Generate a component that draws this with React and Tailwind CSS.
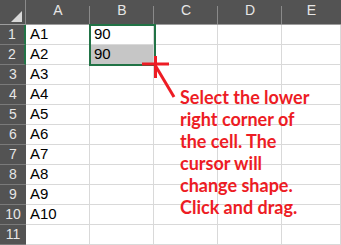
import React from 'react'

const cols = ['A', 'B', 'C', 'D', 'E']
const rows = Array.from({ length: 11 }, (_, i) => i + 1)

const note = [
  'Select the lower',
  'right corner of',
  'the cell. The',
  'cursor will',
  'change shape.',
  'Click and drag.',
]

const cellValue = (r, c) => {
  if (c === 'A' && r <= 10) return `A${r}`
  if (c === 'B' && r <= 2) return '90'
  return ''
}

const HeaderCell = ({ label, last }) => (
  <div className="relative flex items-end justify-center pb-[3px] text-[14px] text-[#e6e6e6] bg-[#535353] border-b border-[#9d9d9d]">
    {label}
    {!last && <span className="absolute right-0 top-[6px] bottom-0 w-px bg-[#8a8a8a]" />}
  </div>
)

const RowHeader = ({ n, active }) => (
  <div
    className={`flex items-center justify-center text-[14px] text-[#e6e6e6] bg-[#535353] border-b border-[#7a7a7a] ${
      active ? 'border-r-2 border-r-[#217346]' : ''
    }`}
  >
    {n}
  </div>
)

export default function App() {
  return (
    <div className="relative w-[341px] h-[245px] overflow-hidden bg-white" style={{ fontFamily: '"Liberation Sans", Arial, sans-serif' }}>
      <div className="grid grid-cols-[26px_64px_64px_64px_64px_59px] grid-rows-[25px_repeat(11,20px)]">
        {/* corner */}
        <div className="relative bg-[#535353] border-b border-[#9d9d9d] border-r border-r-[#8a8a8a]">
          <svg className="absolute right-[3px] bottom-[2px]" width="11" height="11" viewBox="0 0 11 11">
            <polygon points="11,0 11,11 0,11" fill="#d9d9d9" />
          </svg>
        </div>
        {cols.map((c, i) => (
          <HeaderCell key={c} label={c} last={i === cols.length - 1} />
        ))}

        {rows.map((r) => (
          <React.Fragment key={r}>
            <RowHeader n={r} active={r <= 2} />
            {cols.map((c) => (
              <div
                key={c}
                className={`flex items-end pl-[4px] pb-[1px] text-[15px] leading-[18px] text-black border-r border-b border-[#d9d9d9] ${
                  c === 'B' && r === 2 ? 'bg-[#c6c6c6]' : ''
                }`}
              >
                {cellValue(r, c)}
              </div>
            ))}
          </React.Fragment>
        ))}
      </div>

      {/* selection outline B1:B2 */}
      <div className="absolute left-[89px] top-[24px] w-[67px] h-[42px] border-2 border-[#217346] pointer-events-none" />

      {/* cursor cross and pointer line */}
      <svg className="absolute left-0 top-0" width="341" height="245" viewBox="0 0 341 245">
        <g stroke="#ed1c24" strokeWidth="3" fill="none">
          <line x1="142" y1="64" x2="169" y2="64" />
          <line x1="155.5" y1="56" x2="155.5" y2="78" />
          <line x1="155" y1="65" x2="174" y2="97" />
        </g>
      </svg>

      <div
        className="absolute left-[180px] top-[86px] flex flex-col text-[18px] leading-[22px] font-bold text-[#ed1c24] whitespace-nowrap"
        style={{ fontFamily: 'Lato, "Open Sans", sans-serif' }}
      >
        {note.map((line) => (
          <span key={line}>{line}</span>
        ))}
      </div>
    </div>
  )
}
